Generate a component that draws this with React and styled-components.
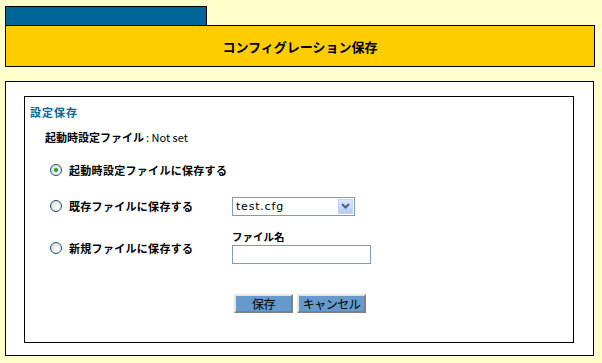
import React from "react";
import styled, { createGlobalStyle } from "styled-components";

const GlobalStyle = createGlobalStyle`
  html, body {
    margin: 0;
    padding: 0;
    background: #ffffcc;
  }
  body {
    font-family: "Noto Sans CJK JP", "DejaVu Sans", sans-serif;
    color: #000;
  }
`;

const Page = styled.div`
  width: 590px;
  padding: 6px 0 8px 5px;
`;

const Tab = styled.div`
  width: 200px;
  height: 18px;
  background: #006699;
  border: 1px solid #000;
  border-bottom: none;
`;

const Header = styled.div`
  height: 40px;
  background: #ffcc00;
  border: 1px solid #000;
  display: flex;
  align-items: center;
  justify-content: center;
  font-size: 13px;
  font-weight: bold;
`;

const Outer = styled.div`
  margin-top: 14px;
  width: 589px;
  height: 275px;
  background: #fff;
  border: 1px solid #000;
  padding: 14px 0 0 18px;
  box-sizing: border-box;
`;

const Inner = styled.div`
  width: 550px;
  height: 247px;
  border: 1px solid #000;
  box-sizing: border-box;
  display: flex;
  flex-direction: column;
`;

const Title = styled.div`
  margin: 8px 0 0 5px;
  line-height: 14px;
  font-size: 11px;
  font-weight: bold;
  letter-spacing: 1px;
  color: #006699;
`;

const Startup = styled.div`
  margin: 11px 0 0 20px;
  line-height: 14px;
  font-size: 11px;
  font-weight: bold;
`;

const Plain = styled.span`
  font-weight: normal;
  font-size: 11px;
  margin-left: 2px;
`;

const Option = styled.div`
  display: grid;
  grid-template-columns: 19px 163px auto;
  align-items: center;
  margin: ${(p) => p.$top}px 0 0 25px;
  min-height: 20px;
`;

const Radio = styled.span`
  width: 10px;
  height: 10px;
  border-radius: 50%;
  border: 1px solid #1c5180;
  background: radial-gradient(circle at 65% 65%, #ffffff 0%, #e6e6e0 60%, #cfd0cc 100%);
  display: flex;
  align-items: center;
  justify-content: center;

  &::after {
    content: "";
    display: ${(p) => (p.$checked ? "block" : "none")};
    width: 4px;
    height: 4px;
    border-radius: 50%;
    background: #21a121;
    box-shadow: 0 0 1px #6fd86f;
  }
`;

const Label = styled.span`
  font-size: 11px;
  font-weight: bold;
  letter-spacing: 0.3px;
  white-space: nowrap;
`;

const Select = styled.div`
  width: 118px;
  height: 17px;
  border: 1px solid #7f9db9;
  background: #fff;
  display: flex;
  align-items: center;
  justify-content: space-between;
  font-family: "DejaVu Sans", sans-serif;
  font-size: 11px;
  letter-spacing: 0.8px;
  padding-left: 3px;
  box-sizing: content-box;
`;

const Arrow = styled.span`
  width: 15px;
  height: 15px;
  margin-right: 1px;
  background: linear-gradient(#dbe6fe, #b6cbf7);
  border: 1px solid #c3d3fd;
  box-sizing: border-box;
  display: flex;
  align-items: center;
  justify-content: center;
`;

const Field = styled.div`
  display: flex;
  flex-direction: column;
`;

const FieldLabel = styled.span`
  font-size: 10.5px;
  font-weight: bold;
  line-height: 12px;
  margin-bottom: 2px;
`;

const TextInput = styled.div`
  width: 137px;
  height: 17px;
  border: 1px solid #7f9db9;
  background: #fff;
`;

const Buttons = styled.div`
  margin-top: 30px;
  display: flex;
  justify-content: center;
  gap: 4px;
  padding-left: 2px;
`;

const Button = styled.button`
  width: ${(p) => p.$w}px;
  height: 19px;
  padding: 0;
  background: #6699cc;
  border: 2px solid;
  border-color: #e8e6e0 #808080 #808080 #e8e6e0;
  font-family: "Noto Sans CJK JP", sans-serif;
  font-size: 12px;
  letter-spacing: -0.5px;
  line-height: 14px;
  color: #000;
`;

const Chevron = () => (
  <svg width="9" height="6" viewBox="0 0 9 6">
    <path d="M1 1 L4.5 4.5 L8 1" fill="none" stroke="#4d6185" strokeWidth="2" />
  </svg>
);

export default function App() {
  return (
    <>
      <GlobalStyle />
      <Page>
        <Tab />
        <Header>コンフィグレーション保存</Header>
        <Outer>
          <Inner>
            <Title>設定保存</Title>
            <Startup>
              起動時設定ファイル<Plain>: Not set</Plain>
            </Startup>
            <Option $top={16}>
              <Radio $checked />
              <Label>起動時設定ファイルに保存する</Label>
            </Option>
            <Option $top={16}>
              <Radio />
              <Label>既存ファイルに保存する</Label>
              <Select>
                test.cfg
                <Arrow>
                  <Chevron />
                </Arrow>
              </Select>
            </Option>
            <Option $top={15}>
              <Radio />
              <Label>新規ファイルに保存する</Label>
              <Field>
                <FieldLabel>ファイル名</FieldLabel>
                <TextInput />
              </Field>
            </Option>
            <Buttons>
              <Button $w={59}>保存</Button>
              <Button $w={69}>キャンセル</Button>
            </Buttons>
          </Inner>
        </Outer>
      </Page>
    </>
  );
}
